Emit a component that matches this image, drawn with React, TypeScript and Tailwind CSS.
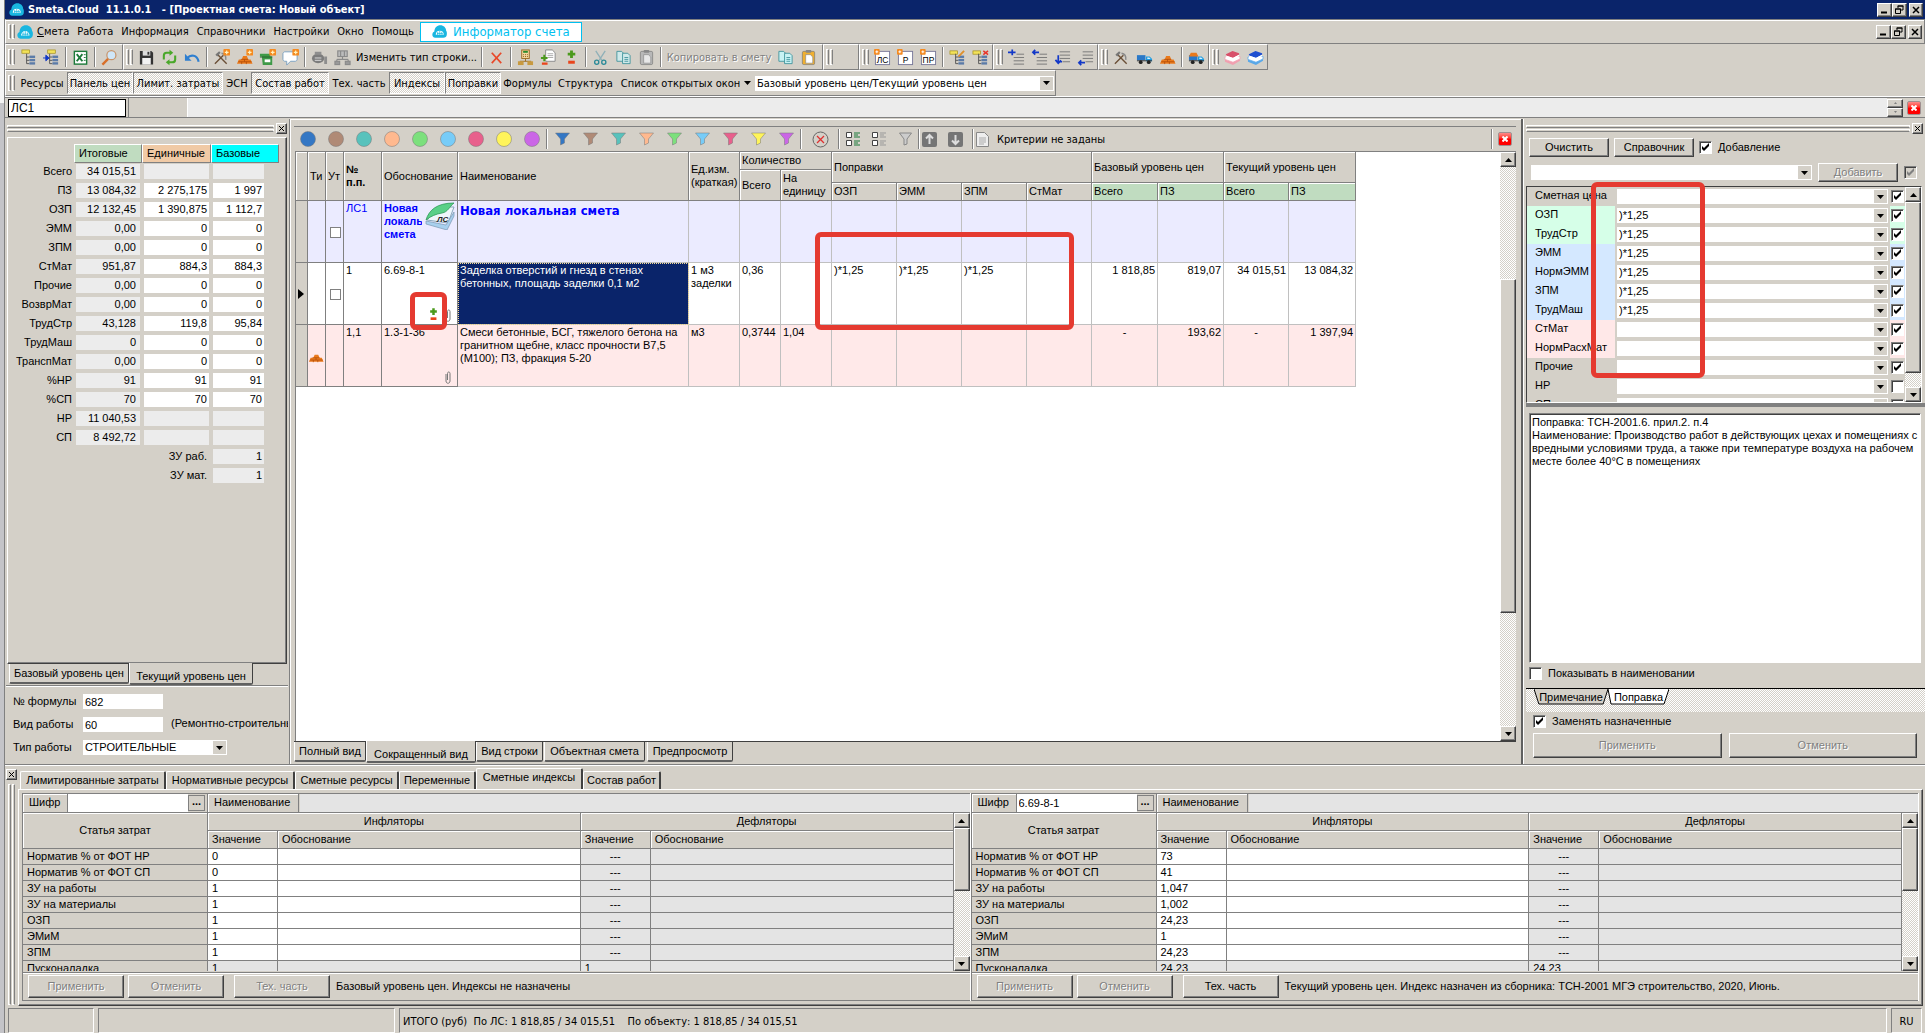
import React from 'react';
import clsx from 'clsx';

const UI = 'font-["DejaVu_Sans_Condensed","Noto_Sans",sans-serif]';
const raised = 'border border-white border-r-[#404040] border-b-[#404040] shadow-[inset_-1px_-1px_#808080]';
const sunken = 'border border-[#808080] border-r-white border-b-white';
const dither = 'bg-[repeating-conic-gradient(#fff_0_25%,#d4d0c8_0_50%)] bg-[length:2px_2px]';
const disabledText = 'text-[#808080] [text-shadow:1px_1px_#fff]';

/* ---------- icons ---------- */

function Svg({ children, size = 18 }: { children: React.ReactNode; size?: number }) {
  return (
    <svg width={size} height={size} viewBox="0 0 18 18" fill="none" className="shrink-0" aria-hidden="true">
      {children}
    </svg>
  );
}

function Cloud({ size = 14 }: { size?: number }) {
  return (
    <Svg size={size}>
      <path d="M4 16.500C1.500 16.500.3 14.600.4 12.500.5 10.700 1.600 9.500 2.800 9 3 4.500 6 1.500 10 1.500c4 0 6.800 3 7 6.500.9 1.200 1 2.600.8 4.500-.2 2.500-1.800 4-4.300 4Z" fill="#19b6e0" />
      <path d="M4.500 13a4.800 5 0 0 1 9.600 0Z" fill="#fff" />
      <path d="M6 11.500h7M9.300 8v5M7 9.500l-.5 3.500M11.600 9.500l.5 3.500" stroke="#19b6e0" strokeWidth=".9" />
    </Svg>
  );
}

const Spark = () => (
  <g>
    <rect x="11" y="0" width="7" height="7" rx="1" fill="#f58a1f" />
    <path d="M14.500 1.500v4M12.500 3.500h4" stroke="#fff3c0" strokeWidth="1.300" />
  </g>
);

const TreeLines = ({ color = '#5b7ba8' }: { color?: string }) => (
  <g>
    <path d="M7 5v10.500M7 8.500h3M7 12h3M7 15.500h3" stroke="#555" />
    <rect x="10" y="7" width="6" height="2.500" fill={color} />
    <rect x="10" y="10.500" width="6" height="2.500" fill={color} />
    <rect x="10" y="14" width="6" height="2.500" fill={color} />
  </g>
);

const Bricks = () => (
  <g>
    <path d="M1 15.500 3 11h3l1.500-3.500h4L13 11h2.500l2 4.500Z" fill="#ea7a1c" />
    <path d="M2.500 13.500h14M5 11h8M6 13.500V16M11 13.500V16M9 11v2.500" stroke="#b04a08" strokeWidth=".8" />
  </g>
);

const Hammer = () => (
  <g>
    <path d="m2 15.500 9-9M4 5l10.500 10.500" stroke="#6b5038" strokeWidth="1.500" />
    <path d="M2.500 6 6.500 2.500 8 4 4.500 8Z" fill="#777" />
    <path d="M9 4.500c3 .5 5 3 4.500 7" stroke="#8a8a8a" strokeWidth="1.500" />
  </g>
);

const Truck = ({ load = false }: { load?: boolean }) => (
  <g>
    <path d="M1 6.500h9V12H1Z" fill="#2a78c8" />
    <path d="M10.500 8h4l2.500 2.500V13h-6.500Z" fill="#1e9be0" />
    <path d="M12 9h2l1.500 1.500H12Z" fill="#d8f0ff" />
    <path d="M1 12.500h16" stroke="#333" />
    {load && <path d="m1 8 2-4h6l2 4Z" fill="#ea7a1c" />}
    <circle cx="5" cy="14" r="2" fill="#222" />
    <circle cx="13.500" cy="14" r="2" fill="#222" />
  </g>
);

const Pages = ({ color }: { color: string }) => (
  <g fill={color} stroke="#3a8f98" strokeWidth=".9">
    <path d="M2 2.500h5l2 2V13H2Z" />
    <path d="M8 4.500h5.500l2.500 2.500v8.500H8Z" />
    <path d="M10 9h4M10 11h4M10 13h4" />
  </g>
);

const Clipboard = ({ color, paper = '#fff' }: { color: string; paper?: string }) => (
  <g>
    <rect x="2.500" y="2.500" width="13" height="14" rx="1.500" fill={color} stroke="#777" strokeWidth=".7" />
    <rect x="6" y="1" width="6" height="3" rx="1" fill="#888" />
    <path d="M6 6h5l2.500 2.500V15H6Z" fill={paper} stroke="#888" strokeWidth=".7" />
  </g>
);

const PlusMinus = () => (
  <g>
    <path d="M9 1.500v8M5 5.500h8" stroke="#4b9a1c" strokeWidth="3" />
    <path d="M5.500 14h7" stroke="#e8451c" strokeWidth="3.200" />
  </g>
);

const Letter = ({ text }: { text: string }) => (
  <g>
    <rect x="1.500" y="2.500" width="15" height="14" fill="#fff" stroke="#7a7a9a" />
    <text x="9" y="14.500" textAnchor="middle" fontSize="9" fill="#000" fontFamily="Liberation Sans, sans-serif">{text}</text>
    <rect x="0" y="0" width="6" height="6" rx="1" fill="#f58a1f" />
    <path d="M3 1.500v3M1.500 3h3" stroke="#fff" />
  </g>
);

const Indent = ({ lines, d }: { lines: string; d: string }) => (
  <g>
    <path d={lines} stroke="#777" />
    <path d={d} stroke="#1238c8" strokeWidth="1.800" />
  </g>
);

const Stack = ({ a, b }: { a: string; b: string }) => (
  <g>
    <path d="M1 11.500 9 8l8 2.500v2L9.500 17 1 13.500Z" fill={b} />
    <path d="M1 8.500 9 5.500l8 2.500v2.500L9.500 14 1 11Z" fill="#fff" stroke={b} strokeWidth=".8" />
    <path d="M2 5.500 9 2l7 2.500v1.500L9.500 9.500 2 7Z" fill={a} />
    <path d="M2 7.500 9.500 10 16 6.500" stroke="#fff" strokeWidth="1.200" />
  </g>
);

const icons: Record<string, React.ReactNode> = {
  tree: <g><rect x="2" y="1" width="8" height="3.500" fill="#f2e25a" stroke="#a08a10" strokeWidth=".7" /><TreeLines /></g>,
  treeArrow: <g><rect x="5" y="1" width="8" height="3.500" fill="#f2e25a" stroke="#a08a10" strokeWidth=".7" /><TreeLines /><path d="M0 9.500h4M3 6.500l3.500 3-3.500 3Z" stroke="#1238c8" fill="#1238c8" /></g>,
  excel: <g><rect x="2.500" y="2.500" width="13" height="13.500" fill="#fff" stroke="#1d7a3a" strokeWidth="1.500" /><path d="m5 5.500 6 7.500M11 5.500 5 13" stroke="#1d7a3a" strokeWidth="2" /><path d="M12.500 6h2M12.500 9h2M12.500 12h2" stroke="#1d7a3a" /></g>,
  search: <g><circle cx="11" cy="6.500" r="4.800" fill="#cfe6f8" stroke="#c8946a" strokeWidth="1.300" /><path d="m7.500 10.500-6 6" stroke="#d8702a" strokeWidth="2.500" /></g>,
  save: <g><path d="M2 2h12l2 2v12.500H2Z" fill="#333" /><rect x="5" y="2" width="8" height="5" fill="#ddd" /><rect x="10" y="3" width="2" height="3" fill="#333" /><rect x="4.500" y="9.500" width="9" height="7" fill="#f2f2f2" /></g>,
  refresh: <g stroke="#4aa82a" strokeWidth="2.200"><path d="M3 11V7c0-2 1-3 3-3h4M15 7v4c0 2-1 3-3 3H8" /><path d="m9 .8 4 3.200-4 3.200ZM9 10.800 5 14l4 3.200Z" fill="#4aa82a" stroke="none" /></g>,
  undo: <g><path d="M3.500 9.500C7 5.500 14 6 15.500 13.500" stroke="#2f7fd0" strokeWidth="2.200" /><path d="M1 5v7.500h7Z" fill="#2f7fd0" /></g>,
  hammerNew: <g><Hammer /><Spark /></g>,
  bricksNew: <g><Bricks /><Spark /></g>,
  machineNew: <g><path d="M1 5h11v3H1ZM3 8h11v9H4Z" fill="#3f9a48" /><path d="M6 11h6v3H6Z" fill="#fff" /><path d="M1 8.500h13" stroke="#265f2c" /><Spark /></g>,
  noteNew: <g><path d="M3 3h11c1 0 2 1 2 2v6c0 1-1 2-2 2H9l-4 4v-4H3c-1 0-2-1-2-2V5c0-1 1-2 2-2Z" fill="#fff" stroke="#7aa0c0" /><Spark /></g>,
  meter: <g><ellipse cx="7.500" cy="10" rx="6.500" ry="5" fill="#7c7c7c" /><path d="M4 3h7v3H4ZM14 8h3v8h-3Z" fill="#8e8e8e" /><path d="M4 9.500h7M4 12h7" stroke="#ddd" /></g>,
  greyTree: <g stroke="#8a8a8a" strokeWidth="1.200"><rect x="4" y="2" width="10" height="6" fill="#bbb" /><path d="M7 2v6M11 2v6M9 8v3M3 11h12M3 11v2M15 11v2" /><rect x="1" y="13" width="5" height="3.500" fill="#999" /><rect x="12" y="13" width="5" height="3.500" fill="#999" /></g>,
  cross: <path d="m4 4 10 11M14 4 4 15" stroke="#e8492a" strokeWidth="1.800" />,
  calc: <g><rect x="5" y="1" width="8" height="9" fill="#f5d9a0" stroke="#9a6a20" /><path d="M6.500 3h5" stroke="#2a8a2a" strokeWidth="2" /><path d="M6.500 6h5M6.500 8h5" stroke="#8a5a18" strokeDasharray="1 1" /><path d="M9 10v3M3 13h12" stroke="#9a6a20" /><rect x="1" y="13" width="6" height="4" fill="#c89a40" /><rect x="11" y="13" width="6" height="4" fill="#c89a40" /></g>,
  docPm: <g><path d="M6 1h7l3 3v9H6Z" fill="#fff" stroke="#888" /><path d="M8 5h6M8 7h6M8 9h6" stroke="#aaa" /><path d="M4.500 6v7M1 9.500h7" stroke="#4b9a1c" strokeWidth="2" /><path d="M2 15.500h6" stroke="#e8451c" strokeWidth="2.400" /></g>,
  pm: <PlusMinus />,
  cut: <g stroke="#8fb0b8" strokeWidth="1.400"><path d="m4 2 6.500 10M14 2 7.500 12" /><circle cx="5" cy="14" r="2.200" stroke="#2a8a98" /><circle cx="12.500" cy="14" r="2.200" stroke="#2a8a98" /></g>,
  copy: <Pages color="#cfe9ea" />,
  pasteOff: <Clipboard color="#b8b8b8" paper="#e8e8e8" />,
  copyOn: <Pages color="#c8f2f4" />,
  paste: <Clipboard color="#f0b030" />,
  ls: <Letter text="ЛС" />,
  r: <Letter text="Р" />,
  pr: <Letter text="ПР" />,
  treeEdit: <g><rect x="1" y="2" width="8" height="3.500" fill="#f2e25a" stroke="#a08a10" strokeWidth=".7" /><TreeLines /><path d="m10 8 6-6" stroke="#e0902a" strokeWidth="2" /></g>,
  treeDel: <g><rect x="1" y="2" width="8" height="3.500" fill="#f2e25a" stroke="#a08a10" strokeWidth=".7" /><TreeLines /><path d="m12 2 5 4M17 2l-5 4" stroke="#e8352a" strokeWidth="1.500" /></g>,
  in1: <Indent lines="M9 5.500h8M6 9h11M6 12.500h11M6 16h11" d="M0 3.500h8M4.500.5v6" />,
  in2: <Indent lines="M9 5.500h8M6 9h11M6 12.500h11M6 16h11" d="M1.500 3.500h7M4.500 1 2 3.500 4.500 6" />,
  in3: <Indent lines="M6 3h11M6 6.500h11M6 10h11M9 13.500h8" d="M4.500 6.500v7h4M1.500 11.500 4.500 15l3-3" />,
  in4: <Indent lines="M6 3h11M6 6.500h11M6 10h11M9 13.500h8" d="M1.500 14.500h7M4.500 12 2 14.500 4.500 17" />,
  hammer: <Hammer />,
  truck: <Truck />,
  bricks: <Bricks />,
  truckLoad: <Truck load />,
  stackRed: <Stack a="#d8506a" b="#f0a0b0" />,
  stackBlue: <Stack a="#1f4fd0" b="#5aa8e8" />,
};

const barA = ['tree', 'treeArrow', '|', 'excel', '|', 'search'];
const barB = ['save', 'refresh', 'undo', '|', 'hammerNew', 'bricksNew', 'machineNew', 'noteNew', '|', 'meter', 'greyTree'];
const barB2 = ['|', 'cross', '|', 'calc', 'docPm', 'pm', '|', 'cut', 'copy', 'pasteOff', '|'];
const barD = ['ls', 'r', 'pr', '|', 'treeEdit', 'treeDel'];
const barE = ['in1', 'in2', 'in3', 'in4'];
const barF = ['hammer', 'truck', 'bricks', '|', 'truckLoad'];
const barG = ['stackRed', 'stackBlue'];

/* ---------- primitives ---------- */

function Grip() {
  return (
    <div className="flex w-[11px] shrink-0 items-center justify-center gap-px self-stretch py-1">
      <i className="h-full w-[3px] border border-white border-r-[#808080]" />
      <i className="h-full w-[3px] border border-white border-r-[#808080]" />
    </div>
  );
}

function Sep({ tight = false }: { tight?: boolean }) {
  return <div className={clsx('h-5 w-0.5 shrink-0 border-l border-[#808080] bg-white', !tight && 'mx-0.5')} />;
}

function Icons({ list }: { list: string[] }) {
  return (
    <>
      {list.map((name, i) =>
        name === '|' ? (
          <Sep key={i} />
        ) : (
          <button key={i} aria-label={name} className="flex h-6 w-[23px] shrink-0 items-center justify-center">
            <Svg size={17}>{icons[name]}</Svg>
          </button>
        ),
      )}
    </>
  );
}

function Bar({ children, className }: { children?: React.ReactNode; className?: string }) {
  return (
    <div className={clsx('flex h-[26px] shrink-0 items-center border border-white border-r-[#808080] border-b-[#808080]', className)}>
      <Grip />
      {children}
    </div>
  );
}

function Arrow({ up = false }: { up?: boolean }) {
  return (
    <svg width="7" height="4" viewBox="0 0 7 4" aria-hidden="true">
      <path d={up ? 'M0 4h7L3.500 0Z' : 'M0 0h7L3.500 4Z'} />
    </svg>
  );
}

function Check({ label, checked = false, disabled = false, hideLabel = false }: { label: string; checked?: boolean; disabled?: boolean; hideLabel?: boolean }) {
  return (
    <label className="flex items-center gap-[6px]">
      <span className="relative flex">
        <input
          type="checkbox"
          defaultChecked={checked}
          disabled={disabled}
          aria-label={label}
          className="peer size-[13px] appearance-none border border-[#808080] border-r-white border-b-white bg-white shadow-[inset_1px_1px_#404040] disabled:bg-[#d4d0c8]"
        />
        <svg viewBox="0 0 13 13" className={clsx('pointer-events-none absolute inset-0 hidden peer-checked:block', disabled ? 'text-[#808080]' : 'text-black')}>
          <path d="M3 5v3l2 2 5-5V2L5 7Z" fill="currentColor" />
        </svg>
      </span>
      {!hideLabel && label}
    </label>
  );
}

function Combo({ value, label, className }: { value: string; label: string; className?: string }) {
  return (
    <div className={clsx('relative flex h-[15px] min-w-0 bg-white', className)}>
      <select aria-label={label} className="h-full w-full appearance-none bg-transparent pl-0.5 leading-[13px] outline-none">
        <option>{value}</option>
      </select>
      <span className="pointer-events-none absolute inset-y-px right-px flex w-[13px] items-center justify-center bg-[#d4d0c8]">
        <Arrow />
      </span>
    </div>
  );
}

function Scroll({ lead, thumb }: { lead?: string; thumb: string }) {
  return (
    <div className={clsx('flex w-4 shrink-0 flex-col', dither)}>
      <button aria-label="Вверх" className={clsx('flex h-[15px] shrink-0 items-center justify-center bg-[#d4d0c8]', raised)}><Arrow up /></button>
      {lead && <div className={lead} />}
      <div className={clsx('bg-[#d4d0c8]', raised, thumb)} />
      <div className="flex-1" />
      <button aria-label="Вниз" className={clsx('flex h-[15px] shrink-0 items-center justify-center bg-[#d4d0c8]', raised)}><Arrow /></button>
    </div>
  );
}

function Btn({ children, className, disabled = false }: { children: React.ReactNode; className?: string; disabled?: boolean }) {
  return (
    <button disabled={disabled} className={clsx('flex shrink-0 items-center justify-center bg-[#d4d0c8]', raised, disabled && disabledText, className)}>
      {children}
    </button>
  );
}

function SmallClose() {
  return (
    <Btn className="size-[11px]">
      <svg width="7" height="7" viewBox="0 0 7 7" aria-label="Закрыть"><path d="m1 1 5 5M6 1 1 6" stroke="#000" /></svg>
    </Btn>
  );
}

function RedClose() {
  return (
    <button aria-label="Закрыть" className="flex size-[14px] items-center justify-center rounded-[2px] border border-[#a09090] bg-linear-to-b from-[#f88] to-[#f00] to-50%">
      <svg width="6" height="6" viewBox="0 0 6 6"><path d="m.5.5 5 5M5.500.5l-5 5" stroke="#fff" strokeWidth="2" /></svg>
    </button>
  );
}

function PanelGrip() {
  return (
    <div className="flex h-[18px] shrink-0 items-center gap-0.5 px-0.5">
      <div className="flex flex-1 flex-col gap-px">
        <i className="h-[3px] border border-white border-b-[#808080]" />
        <i className="h-[3px] border border-white border-b-[#808080]" />
      </div>
      <SmallClose />
    </div>
  );
}

function WinButtons() {
  return (
    <div className="flex items-center">
      <Btn className="h-[14px] w-[15px]"><svg width="9" height="9" aria-label="Свернуть"><path d="M1 7.500h6" stroke="#000" strokeWidth="2" /></svg></Btn>
      <Btn className="h-[14px] w-[15px]"><svg width="9" height="9" aria-label="Восстановить" fill="none" stroke="#000"><path d="M3 3V1h5v4H6M2.500 1h6" /><path d="M.5 4h5v4.500h-5ZM0 4h6" /></svg></Btn>
      <Btn className="ml-0.5 h-[14px] w-[14px]"><svg width="8" height="8" aria-label="Закрыть"><path d="m1 1 6 6M7 1 1 7" stroke="#000" strokeWidth="1.500" /></svg></Btn>
    </div>
  );
}

function TabDown({ text, active = false, className }: { text: string; active?: boolean; className: string }) {
  return (
    <button
      className={clsx(
        'shrink-0 whitespace-nowrap rounded-b-[2px] border-x border-b-2 border-l-white border-r-[#404040] border-b-[#606060] text-center',
        active ? 'relative -mt-px h-[22px] bg-[#d4d0c8] pt-1.5' : 'h-5',
        className,
      )}
    >
      {text}
    </button>
  );
}

/* ---------- left panel ---------- */

type PriceRow = [string, string, string?, string?];

const prices: PriceRow[] = [
  ['Всего', '34 015,51'],
  ['ПЗ', '13 084,32', '2 275,175', '1 997'],
  ['ОЗП', '12 132,45', '1 390,875', '1 112,7'],
  ['ЭММ', '0,00', '0', '0'],
  ['ЗПМ', '0,00', '0', '0'],
  ['СтМат', '951,87', '884,3', '884,3'],
  ['Прочие', '0,00', '0', '0'],
  ['ВозврМат', '0,00', '0', '0'],
  ['ТрудСтр', '43,128', '119,8', '95,84'],
  ['ТрудМаш', '0', '0', '0'],
  ['ТранспМат', '0,00', '0', '0'],
  ['%НР', '91', '91', '91'],
  ['%СП', '70', '70', '70'],
  ['НР', '11 040,53'],
  ['СП', '8 492,72'],
];

function PricePanel() {
  return (
    <aside className="flex w-[285px] shrink-0 flex-col border-r border-[#808080]">
      <PanelGrip />
      <div className="mx-0.5 flex-1 border border-white border-r-[#404040] border-b-[#404040] shadow-[inset_-1px_-1px_#808080]">
        <div className="mt-1.5 ml-[66px] flex h-[19px] leading-[17px]">
          <span className="w-[68px] border border-white border-r-[#808080] border-b-[#808080] bg-[#c0dcc0] pl-1">Итоговые</span>
          <span className="w-[69px] border border-white border-r-[#808080] border-b-[#808080] bg-[#f0caa6] pl-1">Единичные</span>
          <span className="w-[68px] border border-white border-r-[#808080] border-b-[#808080] bg-[#0ff] pl-1">Базовые</span>
        </div>
        <table className="-mt-[3px] border-separate border-spacing-1">
          <tbody>
            {prices.map(([name, total, unit, base]) => (
              <tr key={name} className="h-[15px] leading-[15px]">
                <th scope="row" className="w-[60px] text-right font-normal">{name}</th>
                <td className="w-16 bg-[#ececec] pr-1 text-right">{total}</td>
                <td className={clsx('w-[65px] pr-0.5 text-right', unit ? 'bg-white' : 'bg-[#ececec]')}>{unit}</td>
                <td className={clsx('w-[51px] pr-0.5 text-right', base ? 'bg-white' : 'bg-[#ececec]')}>{base}</td>
              </tr>
            ))}
            {['ЗУ раб.', 'ЗУ мат.'].map((name) => (
              <tr key={name} className="h-[15px] leading-[15px]">
                <th scope="row" colSpan={3} className="pr-0.5 text-right font-normal">{name}</th>
                <td className="bg-[#ececec] pr-0.5 text-right">1</td>
              </tr>
            ))}
          </tbody>
        </table>
      </div>
      <div className="flex h-[21px] shrink-0 pl-1">
        <TabDown text="Базовый уровень цен" className="w-[120px]" />
        <TabDown text="Текущий уровень цен" active className="w-[124px]" />
      </div>
      <div className="mx-px grid grid-cols-[66px_1fr] items-center gap-x-1 gap-y-2 border-t border-[#808080] pt-2 pb-[9px] pl-[7px] shadow-[inset_0_1px_#fff]">
        <label htmlFor="formula">№ формулы</label>
        <input id="formula" defaultValue="682" className="h-[15px] w-20 bg-white px-0.5" />
        <label htmlFor="kind">Вид работы</label>
        <div className="flex gap-2 overflow-hidden whitespace-nowrap">
          <input id="kind" defaultValue="60" className="h-[15px] w-20 shrink-0 bg-white px-0.5" />
          (Ремонтно-строительные)
        </div>
        <span>Тип работы</span>
        <Combo label="Тип работы" value="СТРОИТЕЛЬНЫЕ" className="w-36" />
      </div>
    </aside>
  );
}

/* ---------- centre: estimate grid ---------- */

const palette = ['#3477c4', '#b08a76', '#58c2bc', '#ffb98f', '#7ce07c', '#77ccf8', '#e8608c', '#fff45a', '#cb66e6'];

const hd = 'border-r border-b border-[#808080] bg-[#d4d0c8] px-0.5 text-left font-normal shadow-[inset_1px_1px_#fff] align-middle leading-[13px]';
const cell = 'border-r border-b border-[#c0c0c0] px-0.5 pt-px align-top leading-[13px]';
const fixedCell = 'border-r border-b border-r-[#808080] border-b-[#808080] px-0.5 pt-px align-top leading-[13px]';

const Clip = () => (
  <svg width="6" height="13" viewBox="0 0 6 13" fill="none" stroke="#777" aria-hidden="true">
    <path d="M1 3v7c0 3 4 3 4 0V2.500C5 .5 2.500.5 2.500 2.500V9" />
  </svg>
);

const Book = () => (
  <svg width="30" height="28" viewBox="0 0 30 28" aria-hidden="true">
    <path d="m2 18 12-13h15l-6 16Z" fill="#eef6fb" stroke="#8aa8bc" />
    <path d="m1 19 20 4 8-13v4l-7 14L1 22Z" fill="#a8d0ee" stroke="#7a98b0" strokeWidth=".7" />
    <path d="M1 18C4 8 12 1 29 1c-5 4-6 9-12 10-6 1-11 3-16 7Z" fill="#5ad088" stroke="#2f9a58" strokeWidth=".8" />
    <text x="12" y="20" fontSize="8" fontStyle="italic" fill="#222" fontFamily="Liberation Sans, sans-serif">ЛС</text>
  </svg>
);

function GridToolbar() {
  return (
    <div className="flex h-[25px] shrink-0 items-center border-t border-[#808080]">
      {palette.map((c) => (
        <button key={c} aria-label="Цвет" className="flex w-7 shrink-0 items-center justify-center">
          <svg width="18" height="18"><circle cx="9" cy="9" r="7.500" fill={c} stroke="#777" strokeOpacity=".5" /></svg>
        </button>
      ))}
      <Sep tight />
      {palette.map((c) => (
        <button key={c} aria-label="Фильтр" className="flex w-7 shrink-0 items-center justify-center">
          <svg width="15" height="14"><path d="M.5 1h14L9.500 7v4l-4 2V7Z" fill={c} stroke="#777" strokeOpacity=".5" /></svg>
        </button>
      ))}
      <Sep tight />
      <button aria-label="Сбросить" className="flex w-9 items-center justify-center">
        <svg width="17" height="17" fill="none"><circle cx="8.500" cy="8.500" r="7.500" stroke="#666" /><path d="m5 5 7 7M12 5l-7 7" stroke="#e03030" strokeWidth="1.300" /></svg>
      </button>
      <Sep tight />
      {['#1d7a3a', '#999'].map((c) => (
        <button key={c} aria-label="Список" className="flex w-[26px] items-center justify-center">
          <svg width="16" height="16" fill="none"><path d="M1.500 1.500h5v5h-5ZM1.500 9.500h5v5h-5Z" fill="#fff" stroke="#444" /><path d="M9 2h6M9 4h4M9 6h6M9 10h6M9 12h4M9 14h6" stroke={c} /></svg>
        </button>
      ))}
      <button aria-label="Фильтр" className="flex w-[26px] items-center justify-center">
        <svg width="13" height="14"><path d="M.5 1h12L8 7v5l-3 1V7Z" fill="#ccc" stroke="#888" /></svg>
      </button>
      <Sep tight />
      {['M7.500 3v9M4 6.500 7.500 3 11 6.500', 'M7.500 12V3M4 8.500 7.500 12 11 8.500'].map((d) => (
        <button key={d} aria-label="Переход" className="flex w-[26px] items-center justify-start pl-0.5">
          <svg width="15" height="15" fill="none"><rect width="15" height="15" rx="2" fill="#757575" /><path d={d} stroke="#ddd" strokeWidth="2" /></svg>
        </button>
      ))}
      <Sep tight />
      <svg width="13" height="15" className="ml-0.5" aria-hidden="true"><path d="M.5.500h8l4 4v10H.5Z" fill="#eee" stroke="#888" /><path d="M3 6h7M3 8h7M3 10h7M3 12h5" stroke="#aaa" /></svg>
      <span className={clsx('ml-2', UI)}>Критерии не заданы</span>
      <div className="ml-auto flex items-center gap-[5px] pr-1">
        <Sep tight />
        <RedClose />
      </div>
    </div>
  );
}

function EstimateGrid() {
  const widths = ['w-[12px]', 'w-[18px]', 'w-[18px]', 'w-[38px]', 'w-[76px]', 'w-[231px]', 'w-[51px]', 'w-[41px]', 'w-[51px]', 'w-[65px]', 'w-[65px]', 'w-[65px]', 'w-[65px]', 'w-[66px]', 'w-[66px]', 'w-[65px]', 'w-[67px]'];
  return (
    <div className="relative min-w-0 flex-1 bg-white">
      <table className="w-[1060px] table-fixed border-separate border-spacing-0">
        <colgroup>{widths.map((w, i) => <col key={i} className={w} />)}</colgroup>
        <thead>
          <tr className="h-[18px]">
            <th rowSpan={3} className={hd} />
            <th rowSpan={3} className={clsx(hd, 'overflow-hidden')}>Ти</th>
            <th rowSpan={3} className={clsx(hd, 'overflow-hidden')}>Ут</th>
            <th rowSpan={3} className={hd}><b>№<br />п.п.</b></th>
            <th rowSpan={3} className={hd}>Обоснование</th>
            <th rowSpan={3} className={hd}>Наименование</th>
            <th rowSpan={3} className={clsx(hd, 'overflow-hidden whitespace-nowrap')}>Ед.изм.<br />(краткая)</th>
            <th colSpan={2} className={hd}>Количество</th>
            <th colSpan={4} rowSpan={2} className={hd}>Поправки</th>
            <th colSpan={2} rowSpan={2} className={hd}>Базовый уровень цен</th>
            <th colSpan={2} rowSpan={2} className={hd}>Текущий уровень цен</th>
          </tr>
          <tr className="h-[13px]">
            <th rowSpan={2} className={hd}>Всего</th>
            <th rowSpan={2} className={hd}>На единицу</th>
          </tr>
          <tr className="h-[18px]">
            {['ОЗП', 'ЭММ', 'ЗПМ', 'СтМат'].map((t) => <th key={t} className={hd}>{t}</th>)}
            {['Всего', 'ПЗ', 'Всего', 'ПЗ'].map((t, i) => (
              <th key={i} className="border-r border-b border-[#808080] bg-[#c0dcc0] px-0.5 text-left font-normal shadow-[inset_1px_1px_#fff]">{t}</th>
            ))}
          </tr>
        </thead>
        <tbody>
          <tr className="h-[62px] bg-[#ebebff]">
            <td className={clsx(fixedCell, 'bg-[#d4d0c8]')} />
            <td className={fixedCell} />
            <td className={clsx(fixedCell, 'align-middle!')}><input type="checkbox" aria-label="ЛС1" className="mx-0.5 block size-[11px] appearance-none border border-[#808080] bg-white" /></td>
            <td className={clsx(fixedCell, 'text-[#00f]')}>ЛС1</td>
            <td className={fixedCell}>
              <div className="relative font-bold text-[#00f]">
                <div className="w-[38px] overflow-hidden">Новая локальная смета</div>
                <span className="absolute top-0 right-0"><Book /></span>
              </div>
            </td>
            <td className={clsx(cell, 'text-[13px] leading-[17px] font-bold text-[#00f]', UI)}>Новая локальная смета</td>
            {Array.from({ length: 11 }, (_, i) => <td key={i} className={cell} />)}
          </tr>
          <tr className="h-[62px]">
            <td className={clsx(fixedCell, 'bg-[#d4d0c8] align-middle!')}><svg width="6" height="10"><path d="M0 0v10l6-5Z" /></svg></td>
            <td className={fixedCell} />
            <td className={clsx(fixedCell, 'align-middle!')}><input type="checkbox" aria-label="Строка 1" className="mx-0.5 block size-[11px] appearance-none border border-[#808080] bg-white" /></td>
            <td className={fixedCell}>1</td>
            <td className={fixedCell}>
              <div className="flex h-[58px] flex-col justify-between">
                6.69-8-1
                <div className="flex items-end justify-end gap-1 pr-1"><Svg size={15}><PlusMinus /></Svg><Clip /></div>
              </div>
            </td>
            <td className={clsx(cell, 'bg-[#0a246a] text-white outline-1 -outline-offset-1 outline-dotted outline-[#f5db95]')}>
              Заделка отверстий и гнезд в стенах бетонных, площадь заделки 0,1 м2
            </td>
            <td className={cell}>1 м3 заделки</td>
            <td className={cell}>0,36</td>
            <td className={cell} />
            <td className={cell}>)*1,25</td>
            <td className={cell}>)*1,25</td>
            <td className={cell}>)*1,25</td>
            <td className={cell} />
            <td className={clsx(cell, 'text-right')}>1 818,85</td>
            <td className={clsx(cell, 'text-right')}>819,07</td>
            <td className={clsx(cell, 'text-right')}>34 015,51</td>
            <td className={clsx(cell, 'text-right')}>13 084,32</td>
          </tr>
          <tr className="h-[62px] bg-[#ffe9e9]">
            <td className={clsx(fixedCell, 'bg-[#d4d0c8]')} />
            <td className={clsx(fixedCell, 'px-0! align-middle!')}><Svg size={16}><Bricks /></Svg></td>
            <td className={fixedCell} />
            <td className={fixedCell}>1,1</td>
            <td className={fixedCell}>
              <div className="flex h-[58px] flex-col justify-between">
                1.3-1-36
                <div className="flex justify-end pr-1"><Clip /></div>
              </div>
            </td>
            <td className={cell}>Смеси бетонные, БСГ, тяжелого бетона на гранитном щебне, класс прочности В7,5 (М100); ПЗ, фракция 5-20</td>
            <td className={cell}>м3</td>
            <td className={cell}>0,3744</td>
            <td className={cell}>1,04</td>
            <td className={cell} />
            <td className={cell} />
            <td className={cell} />
            <td className={cell} />
            <td className={clsx(cell, 'text-center')}>-</td>
            <td className={clsx(cell, 'text-right')}>193,62</td>
            <td className={clsx(cell, 'text-center')}>-</td>
            <td className={clsx(cell, 'text-right')}>1 397,94</td>
          </tr>
        </tbody>
      </table>
      <div className="absolute top-[140px] left-[114px] h-[38px] w-[37px] rounded-md border-[5px] border-[#e53a30]" />
      <div className="absolute top-[80px] left-[519px] h-[98px] w-[259px] rounded-md border-[5px] border-[#e53a30]" />
    </div>
  );
}

/* ---------- right panel ---------- */

const fixes: [string, string, string, boolean][] = [
  ['Сметная цена', '', '', true],
  ['ОЗП', ')*1,25', 'bg-[#d6ffe8]', true],
  ['ТрудСтр', ')*1,25', 'bg-[#d6ffe8]', true],
  ['ЭММ', ')*1,25', 'bg-[#d4e8ff]', true],
  ['НормЭММ', ')*1,25', 'bg-[#d4e8ff]', true],
  ['ЗПМ', ')*1,25', 'bg-[#d4e8ff]', true],
  ['ТрудМаш', ')*1,25', 'bg-[#d4e8ff]', true],
  ['СтМат', '', 'bg-[#ffe8e8]', true],
  ['НормРасхМат', '', 'bg-[#ffe8e8]', true],
  ['Прочие', '', '', true],
  ['НР', '', '', false],
  ['СП', '', '', false],
];

function FixPanel() {
  return (
    <aside className="relative flex w-[402px] shrink-0 flex-col border-l border-white">
      <PanelGrip />
      <div className="mt-px flex items-center gap-[5px] pl-[5px]">
        <Btn className="h-[19px] w-20">Очистить</Btn>
        <Btn className="h-[19px] w-20">Справочник</Btn>
        <Check label="Добавление" checked />
      </div>
      <div className="mt-1.5 flex items-center gap-1.5 pr-2 pl-[7px]">
        <Combo label="Поправка" value="" className="flex-1" />
        <Btn disabled className="h-[19px] w-20">Добавить</Btn>
        <Check label="Добавить" checked disabled hideLabel />
      </div>
      <div className="mt-1 mr-[3px] ml-0.5 flex h-[217px] shrink-0 border border-[#404040] border-r-white border-b-white">
        <div className="flex-1 overflow-hidden">
          {fixes.map(([name, value, tone, on]) => (
            <div key={name} className="flex h-[19px] items-center">
              <span className={clsx('h-full w-[88px] pl-2 leading-[17px]', tone)}>{name}</span>
              <Combo label={name} value={value} className="mx-0.5 flex-1" />
              <span className={clsx('flex h-full w-[15px] items-center justify-center', tone)}>
                <Check label={name} checked={on} hideLabel />
              </span>
            </div>
          ))}
        </div>
        <Scroll thumb="h-[171px]" />
      </div>
      <div className="ml-0.5 h-1 shrink-0 bg-[#808080]" />
      <textarea
        aria-label="Примечание"
        className={clsx('mt-[6px] mr-1 ml-[5px] min-h-0 flex-1 resize-none bg-white pt-0.5 pl-0.5 leading-[13px] shadow-[inset_1px_1px_#404040] outline-none', sunken)}
        defaultValue={'Поправка: ТСН-2001.6. прил.2. п.4\nНаименование: Производство работ в действующих цехах и помещениях с вредными условиями труда, а также при температуре воздуха на рабочем месте более 40°С в помещениях'}
      />
      <div className="mt-1 pl-[5px]"><Check label="Показывать в наименовании" /></div>
      <div className={clsx('mt-2 ml-0.5 flex h-6 shrink-0 border-t border-black pl-2', dither)}>
        <button className="relative h-4 w-[74px] text-center">
          <svg viewBox="0 0 76 16" preserveAspectRatio="none" className="absolute inset-0 h-full w-full"><path d="M0 0 5 15h66l5-15" fill="#d4d0c8" stroke="#000" /></svg>
          <span className="relative">Примечание</span>
        </button>
        <button className="relative h-4 w-[61px] text-center">
          <svg viewBox="0 0 61 16" preserveAspectRatio="none" className="absolute inset-0 h-full w-full"><path d="M0 0 3 15h53l5-15" fill="#fff" stroke="#000" /></svg>
          <span className="relative">Поправка</span>
        </button>
      </div>
      <div className="mt-[3px] pl-[9px]"><Check label="Заменять назначенные" checked /></div>
      <div className="mt-[5px] mb-1.5 grid grid-cols-2 gap-[7px] pr-2 pl-[9px]">
        <Btn disabled className="h-[25px]">Применить</Btn>
        <Btn disabled className="h-[25px]">Отменить</Btn>
      </div>
      <div className="pointer-events-none absolute top-[63px] left-[67px] h-[196px] w-[114px] rounded-md border-[5px] border-[#e53a30]" />
    </aside>
  );
}

/* ---------- bottom: indexes ---------- */

const articles = ['Норматив % от ФОТ НР', 'Норматив % от ФОТ СП', 'ЗУ на работы', 'ЗУ на материалы', 'ОЗП', 'ЭМиМ', 'ЗПМ', 'Пусконаладка'];

interface IndexTableProps {
  id: string;
  code: string;
  values: string[];
  note: string;
  techEnabled?: boolean;
}

function IndexTable({ id, code, values, note, techEnabled = false }: IndexTableProps) {
  const th = 'border-r border-b border-[#808080] bg-[#d4d0c8] text-center font-normal shadow-[inset_1px_1px_#fff]';
  return (
    <section className="flex min-w-0 flex-1 flex-col border-x border-[#808080] border-r-white">
      <div className="flex h-5 shrink-0 items-stretch border-y border-[#808080] leading-[17px]">
        <label htmlFor={id} className="w-[45px] border-r border-[#808080] pl-1.5 shadow-[inset_1px_1px_#fff]">Шифр</label>
        <input id={id} defaultValue={code} className="w-[120px] bg-white px-0.5" />
        <button aria-label="Выбрать" className="my-px w-[17px] border border-[#808080] pb-1 leading-[8px] font-bold">...</button>
        <span className="ml-0.5 w-[92px] border-x border-[#808080] pl-1.5 shadow-[inset_1px_1px_#fff]">Наименование</span>
        <span className="ml-px flex-1 bg-[#e4e4e4]" />
      </div>
      <div className="flex h-[158px] shrink-0">
        <div className="min-w-0 flex-1 overflow-hidden">
          <table className="w-full table-fixed border-separate border-spacing-0 leading-[13px]">
            <colgroup>
              <col className="w-[185px]" />
              <col className="w-[70px]" />
              <col />
              <col className="w-[70px]" />
              <col />
            </colgroup>
            <thead>
              <tr className="h-[18px]">
                <th rowSpan={2} className={th}>Статья затрат</th>
                <th colSpan={2} className={th}>Инфляторы</th>
                <th colSpan={2} className={th}>Дефляторы</th>
              </tr>
              <tr className="h-[18px]">
                {['Значение', 'Обоснование', 'Значение', 'Обоснование'].map((t, i) => (
                  <th key={i} className={clsx(th, 'pl-1 text-left!')}>{t}</th>
                ))}
              </tr>
            </thead>
            <tbody>
              {articles.map((name, i) => {
                const last = i === articles.length - 1;
                const td = 'border-r border-b border-[#808080] px-1';
                return (
                  <tr key={name} className="h-4">
                    <th scope="row" className={clsx(td, 'text-left font-normal')}>{name}</th>
                    <td className={clsx(td, last ? 'bg-[#e4e4e4]' : 'bg-white')}>{values[i]}</td>
                    <td className={clsx(td, last ? 'bg-[#e4e4e4]' : 'bg-white')} />
                    <td className={clsx(td, 'bg-[#e4e4e4]', !last && 'text-center')}>{last ? values[i] : '---'}</td>
                    <td className={clsx(td, 'bg-[#e4e4e4]')} />
                  </tr>
                );
              })}
            </tbody>
          </table>
        </div>
        <Scroll thumb="h-[63px]" />
      </div>
      <div className="mt-px flex h-[29px] shrink-0 items-center border-y border-[#808080] pl-[5px] whitespace-nowrap shadow-[inset_0_1px_#fff]">
        <Btn disabled className="h-[23px] w-24">Применить</Btn>
        <Btn disabled className="ml-1 h-[23px] w-24">Отменить</Btn>
        <Btn disabled={!techEnabled} className="ml-2.5 h-[23px] w-24">Тех. часть</Btn>
        <span className="ml-1.5">{note}</span>
      </div>
    </section>
  );
}

const bottomTabs: [string, string][] = [
  ['Лимитированные затраты', 'w-[146px]'],
  ['Нормативные ресурсы', 'w-[129px]'],
  ['Сметные ресурсы', 'w-[104px]'],
  ['Переменные', 'w-[77px]'],
  ['Сметные индексы', 'w-[107px]'],
  ['Состав работ', 'w-[78px]'],
];

function BottomPanel() {
  return (
    <div className="flex shrink-0 border-t border-[#808080] shadow-[inset_0_1px_#fff]">
      <div className="flex w-[13px] shrink-0 flex-col items-center gap-1 pt-1 pb-px">
        <SmallClose />
        <div className="flex flex-1 gap-px">
          <i className="w-[3px] border border-white border-r-[#808080]" />
          <i className="w-[3px] border border-white border-r-[#808080]" />
        </div>
      </div>
      <div className="min-w-0 flex-1 pr-0.5">
        <div className="flex h-6 items-end pl-0.5">
          {bottomTabs.map(([text, w]) => {
            const active = text === 'Сметные индексы';
            return (
              <button
                key={text}
                className={clsx('shrink-0 rounded-t-[2px] border-t border-l border-white border-r-2 border-r-[#404040] whitespace-nowrap', active ? 'h-[21px] pb-1' : 'h-[18px]', w)}
              >
                {text}
              </button>
            );
          })}
        </div>
        <div className="flex border border-white border-r-[#404040] border-b-[#404040] px-[3px] pt-[3px] pb-1 shadow-[inset_-1px_-1px_#808080]">
          <IndexTable id="code-base" code="" values={['0', '0', '1', '1', '1', '1', '1', '1']} note="Базовый уровень цен. Индексы не назначены" />
          <IndexTable
            id="code-cur"
            code="6.69-8-1"
            values={['73', '41', '1,047', '1,002', '24,23', '1', '24,23', '24,23']}
            note="Текущий уровень цен. Индекс назначен из сборника: ТСН-2001 МГЭ строительство, 2020, Июнь."
            techEnabled
          />
        </div>
      </div>
    </div>
  );
}

/* ---------- page ---------- */

const menu = ['Работа', 'Информация', 'Справочники', 'Настройки', 'Окно', 'Помощь'];

const views: [string, string, boolean][] = [
  ['Ресурсы', 'w-[50px]', false],
  ['Панель цен', 'w-[66px]', true],
  ['Лимит. затраты', 'w-[90px]', true],
  ['ЭСН', 'w-[28px]', false],
  ['Состав работ', 'w-[78px]', true],
  ['Тех. часть', 'w-[60px]', false],
  ['Индексы', 'w-[56px]', true],
  ['Поправки', 'w-[56px]', true],
  ['Формулы', 'w-[53px]', false],
  ['Структура', 'w-[63px]', false],
];

export default function App() {
  return (
    <div className="flex h-screen min-h-[700px] overflow-hidden bg-[#d4d0c8] font-['Liberation_Sans',Arial,sans-serif] text-[11px] leading-[13px] text-black">
      <div className="w-[5px] shrink-0 border-r border-[#808080] bg-linear-to-b from-[#f4f4f4] from-10% to-[#c4c4c8] to-10%" />
      <div className="flex min-w-0 flex-1 flex-col">
        <header className={UI}>
          <div className="flex h-[19px] items-center gap-1 bg-[#0a246a] pr-0.5 pl-1 text-[11px] font-bold text-white">
            <Cloud size={15} />
            <h1 className="flex-1 whitespace-pre">Smeta.Cloud  11.1.0.1   - [Проектная смета: Новый объект]</h1>
            <span className="text-black"><WinButtons /></span>
          </div>
          <nav className="flex h-[25px] items-center border border-[#808080] border-l-white pr-0.5 shadow-[inset_0_1px_#fff]">
            <Grip />
            <Cloud size={16} />
            <a href="#" className="px-1"><u>С</u>мета</a>
            {menu.map((t) => <a key={t} href="#" className="px-1">{t}</a>)}
            <button className="ml-0.5 flex h-5 w-[162px] items-center justify-center gap-1.5 border border-[#00bff0] bg-white text-[13px] text-[#00bff0]">
              <Cloud size={15} />
              Информатор счета
            </button>
            <span className="ml-auto"><WinButtons /></span>
          </nav>
          <div className="flex h-[26px]">
            <Bar className="w-[118px]"><Icons list={barA} /></Bar>
            <Bar className="w-[700px]">
              <Icons list={barB} />
              <button className="w-[125px] shrink-0 whitespace-nowrap">Изменить тип строки...</button>
              <Icons list={barB2} />
              <button disabled className={clsx('w-[110px] shrink-0 whitespace-nowrap', disabledText)}>Копировать в смету</button>
              <Icons list={['copyOn', 'paste']} />
            </Bar>
            <Bar className="w-9" />
            <Bar className="w-[134px]"><Icons list={barD} /></Bar>
            <Bar className="w-[105px]"><Icons list={barE} /></Bar>
            <Bar className="w-[111px]"><Icons list={barF} /></Bar>
            <Bar className="w-[59px]"><Icons list={barG} /></Bar>
          </div>
          <div className="flex h-[27px] border-b border-white">
            <Bar className="w-[1051px]">
              {views.map(([t, w, on]) => (
                <button key={t} className={clsx('h-[22px] shrink-0 whitespace-nowrap', w, on && sunken, on && dither)}>{t}</button>
              ))}
              <button className="flex w-[138px] shrink-0 items-center justify-center gap-1 whitespace-nowrap">Список открытых окон <Arrow /></button>
              <Combo label="Уровень цен" value="Базовый уровень цен/Текущий уровень цен" className="mr-px flex-1" />
            </Bar>
          </div>
        </header>
        <div className="flex h-[21px] shrink-0 items-center border-y border-[#808080] pl-[3px]">
          <input aria-label="Ячейка" defaultValue="ЛС1" className="h-[18px] w-[118px] border border-black bg-white px-0.5 text-[12px]" />
          <div className="ml-0.5 h-full w-[60px] border-x border-l-[#808080] border-r-white" />
          <div className="h-full flex-1 bg-[#ececec]" />
          <div className="flex w-4 flex-col">
            <Btn className="h-[9px]"><svg width="3" height="2"><path d="M0 2h3L1.500 0Z" fill="#808080" /></svg></Btn>
            <Btn className="h-[9px]"><svg width="3" height="2"><path d="M0 0h3L1.500 2Z" fill="#808080" /></svg></Btn>
          </div>
          <div className="px-1"><RedClose /></div>
        </div>

        <main className="mt-px flex min-h-0 flex-1">
          <PricePanel />
          <div className="flex min-w-0 flex-1 flex-col border-r-2 border-[#606060] pt-[7px] pr-[5px] pl-1 shadow-[inset_1px_1px_#fff]">
            <GridToolbar />
            <div className="ml-px flex min-h-0 flex-1 border-t border-l border-[#808080]">
              <EstimateGrid />
              <Scroll lead="h-28" thumb="h-[334px]" />
            </div>
            <div className="flex h-[23px] shrink-0 border-t border-[#404040]">
              <TabDown text="Полный вид" className="w-[72px]" />
              <TabDown text="Сокращенный вид" active className="w-[110px]" />
              <TabDown text="Вид строки" className="w-[67px]" />
              <TabDown text="Объектная смета" className="ml-px w-[101px]" />
              <TabDown text="Предпросмотр" className="ml-0.5 w-[86px]" />
            </div>
          </div>
          <FixPanel />
        </main>

        <BottomPanel />

        <footer className={clsx('flex h-[27px] shrink-0 gap-1 pt-0.5 pr-[3px] pl-[3px] text-[11px] leading-[26px]', UI)}>
          <span className={clsx('w-[86px]', sunken)} />
          <span className={clsx('w-[297px]', sunken)} />
          <span className={clsx('flex-1 pl-[3px] whitespace-pre', sunken)}>ИТОГО (руб)  По ЛС: 1 818,85 / 34 015,51    По объекту: 1 818,85 / 34 015,51</span>
          <span className={clsx('w-[31px] text-center', sunken)}>RU</span>
        </footer>
      </div>
    </div>
  );
}
